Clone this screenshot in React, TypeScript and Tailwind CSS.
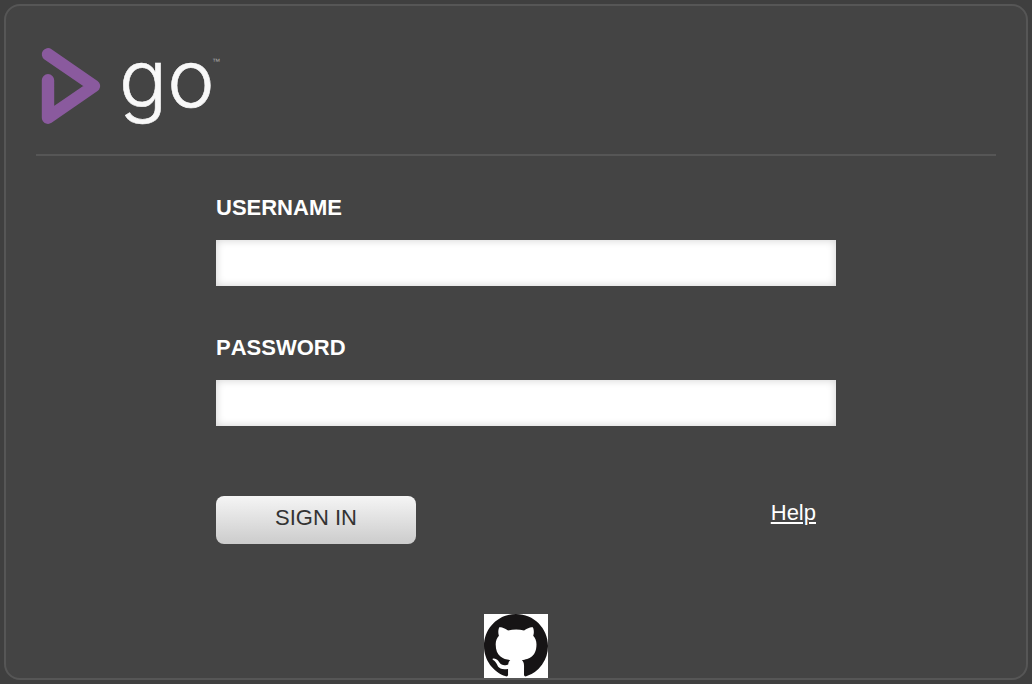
function GoLogo() {
  return (
    <svg viewBox="0 0 190 84" className="h-[84px] w-[190px] overflow-visible" role="img" aria-label="Go">
      <path
        d="M12 10.3 58 42 12 73.7V36.3"
        fill="none"
        stroke="#8a5a9e"
        strokeWidth="12.4"
        strokeLinecap="round"
        strokeLinejoin="round"
      />
      <text
        x="83"
        y="63"
        fill="#f8f8f8"
        stroke="#f8f8f8"
        strokeWidth="0.6"
        className="font-['Inter',sans-serif] text-[80px] font-light"
      >
        go
      </text>
      <text x="176" y="20" fill="#a8a8a8" className="font-['Liberation_Sans',sans-serif] text-[8px]">
        ™
      </text>
    </svg>
  );
}

function GitHubMark() {
  return (
    <svg viewBox="0 0 16 16" className="block size-16 bg-white" aria-hidden="true">
      <path
        fill="#161415"
        fillRule="evenodd"
        d="M8 0C3.58 0 0 3.58 0 8c0 3.54 2.29 6.53 5.47 7.59.4.07.55-.17.55-.38 0-.19-.01-.82-.01-1.49-2.01.37-2.53-.49-2.69-.94-.09-.23-.48-.94-.82-1.13-.28-.15-.68-.52-.01-.53.63-.01 1.08.58 1.23.82.72 1.21 1.87.87 2.33.66.07-.52.28-.87.51-1.07-1.78-.2-3.64-.89-3.64-3.95 0-.87.31-1.59.82-2.15-.08-.2-.36-1.02.08-2.12 0 0 .67-.21 2.2.82.64-.18 1.32-.27 2-.27s1.36.09 2 .27c1.53-1.04 2.2-.82 2.2-.82.44 1.1.16 1.92.08 2.12.51.56.82 1.27.82 2.15 0 3.07-1.87 3.75-3.65 3.95.29.25.54.73.54 1.48 0 1.07-.01 1.93-.01 2.2 0 .21.15.46.55.38A8.01 8.01 0 0 0 16 8c0-4.42-3.58-8-8-8Z"
      />
    </svg>
  );
}

function Field({ id, label, type }: { id: string; label: string; type: string }) {
  return (
    <div className="flex flex-col gap-5">
      <label htmlFor={id} className="text-[22px] leading-6 font-bold">
        {label}
      </label>
      <input
        id={id}
        name={id}
        type={type}
        className="h-[46px] w-full bg-white px-3 text-[22px] text-[#333] shadow-[inset_0_0_8px_#d0d0d0] outline-none"
      />
    </div>
  );
}

export default function App() {
  return (
    <div className="flex min-h-screen flex-col bg-[#3f3f3f] p-1 font-['Liberation_Sans',Arial,sans-serif] text-white [font-kerning:none]">
      <main className="flex flex-1 flex-col rounded-2xl border-2 border-[#565656] bg-[#444] px-[30px]">
        <header className="border-b-2 border-[#565656] pt-[38px] pb-[26px]">
          <GoLogo />
        </header>
        <form className="flex flex-col gap-[50px] pt-10 pr-[160px] pl-[180px]" onSubmit={(e) => e.preventDefault()}>
          <Field id="username" label="USERNAME" type="text" />
          <Field id="password" label="PASSWORD" type="password" />
          <div className="flex items-start justify-between pt-5 pr-5">
            <button
              type="submit"
              className="h-12 w-[200px] rounded-lg bg-linear-to-b from-[#f5f5f5] to-[#cccccc] pb-1.5 text-[22px] text-[#333]"
            >
              SIGN IN
            </button>
            <a href="#help" className="pt-[5px] text-[22px] leading-6 underline decoration-2 underline-offset-2">
              Help
            </a>
          </div>
        </form>
        <footer className="mt-auto flex justify-center">
          <a href="#github" aria-label="GitHub">
            <GitHubMark />
          </a>
        </footer>
      </main>
    </div>
  );
}
